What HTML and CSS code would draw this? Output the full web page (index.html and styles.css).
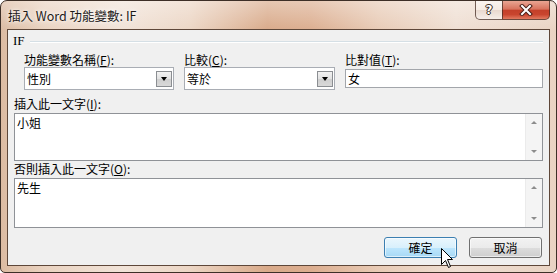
FILE: index.html
```html
<!DOCTYPE html>
<html lang="zh-Hant">
<head>
    <meta charset="UTF-8">
    <title>插入 Word 功能變數: IF</title>
    <link rel="stylesheet" href="styles.css">
</head>
<body>
    <div class="window">
        <div class="titlebar">
            <span class="title">插入 Word 功能變數: IF</span>
            <div class="caption-buttons">
                <div class="cap-btn help">?</div>
                <div class="cap-btn close">
                    <svg width="14" height="12" viewBox="0 0 14 12">
                        <path d="M3 2 L11 10 M11 2 L3 10" stroke="#4a2018" stroke-width="4" stroke-linecap="square"/>
                        <path d="M3 2 L11 10 M11 2 L3 10" stroke="#fff" stroke-width="2" stroke-linecap="square"/>
                    </svg>
                </div>
            </div>
        </div>

        <div class="client">
            <div class="group-title"><span>IF</span></div>

            <div class="fields">
                <div class="label">功能變數名稱(<u>F</u>):</div>
                <div class="label">比較(<u>C</u>):</div>
                <div class="label">比對值(<u>T</u>):</div>

                <div class="combo">
                    <span>性別</span>
                    <div class="drop-btn"></div>
                </div>
                <div class="combo">
                    <span>等於</span>
                    <div class="drop-btn"></div>
                </div>
                <div class="textfield">女</div>
            </div>

            <div class="label block">插入此一文字(<u>I</u>):</div>
            <div class="textbox first">
                <span class="text">小姐</span>
                <div class="scrollbar">
                    <div class="arrow up"></div>
                    <div class="arrow down"></div>
                </div>
            </div>

            <div class="label block second">否則插入此一文字(<u>O</u>):</div>
            <div class="textbox last">
                <span class="text">先生</span>
                <div class="scrollbar">
                    <div class="arrow up"></div>
                    <div class="arrow down"></div>
                </div>
            </div>

            <div class="buttons">
                <div class="btn default">確定</div>
                <div class="btn">取消</div>
            </div>
        </div>

        <svg class="cursor" width="13" height="21" viewBox="0 0 13 21">
            <path d="M0.5 0.5 L0.5 16.5 L4.5 12.5 L7.5 19.5 L9.5 18.5 L6.5 11.5 L11.5 11.5 Z" fill="#fff" stroke="#000" stroke-width="1"/>
        </svg>
    </div>
</body>
</html>
```

FILE: styles.css
```css
body {
    margin: 0;
    font-family: "Noto Sans CJK TC", "Noto Sans", sans-serif;
    font-size: 12px;
    color: #000;
    background: #fff;
}
.window {
    position: relative;
    width: 557px;
    height: 273px;
    box-sizing: border-box;
    border: 1px solid #3d2f27;
    border-radius: 7px 7px 5px 5px;
    padding: 0 6px 6px 6px;
    display: flex;
    flex-direction: column;
    background:
        linear-gradient(to bottom, rgba(255, 255, 255, 0.35), rgba(255, 255, 255, 0) 30px),
        linear-gradient(to right, #dcbba2 0%, #ead3c1 8%, #f1e3d8 22%, #ecd6c5 34%, #d9aa8a 48%, #dcae90 56%, #e8cbb6 68%, #efdfd3 82%, #e9d3c3 100%);
}
.titlebar {
    height: 28px;
    display: flex;
    align-items: flex-start;
}
.title {
    padding: 7px 0 0 1px;
    font-size: 12.5px;
    line-height: 16px;
    color: #1e1a18;
    text-shadow: 0 0 6px rgba(255, 255, 255, 0.95), 0 0 3px rgba(255, 255, 255, 0.9);
}
.caption-buttons {
    margin-left: auto;
    display: flex;
}
.cap-btn {
    height: 19px;
    box-sizing: border-box;
    border: 1px solid rgba(70, 45, 35, 0.75);
    border-top: none;
    display: flex;
    align-items: center;
    justify-content: center;
}
.help {
    width: 27px;
    border-right: none;
    border-radius: 0 0 0 5px;
    background: linear-gradient(to bottom, rgba(255, 255, 255, 0.55), rgba(255, 255, 255, 0.25) 50%, rgba(220, 200, 190, 0.4) 51%, rgba(255, 255, 255, 0.45));
    font-family: "DejaVu Sans", sans-serif;
    font-weight: bold;
    font-size: 12px;
    color: #fff;
    text-shadow: 0 0 1px #3a2a22, 1px 0 0 #3a2a22, -1px 0 0 #3a2a22, 0 1px 0 #3a2a22, 0 -1px 0 #3a2a22;
}
.close {
    width: 48px;
    border-radius: 0 0 5px 0;
    background: linear-gradient(to bottom, #e9a593 0%, #d8735e 45%, #c4402a 52%, #c9452e 75%, #e27a60 100%);
}
.client {
    flex: 1;
    border: 1px solid #5e4739;
    background: #f0f0f0;
    padding: 3px 6px 0 6px;
}
.group-title {
    display: flex;
    align-items: center;
    height: 15px;
    font-family: "Liberation Serif", serif;
    font-size: 13px;
}
.group-title span {
    margin-left: -1px;
    padding-right: 5px;
}
.group-title::after {
    content: "";
    flex: 1;
    border-top: 1px solid #d5dfe5;
    border-bottom: 1px solid #fff;
    margin-top: 3px;
}
.label {
    height: 14px;
    line-height: 14px;
    white-space: nowrap;
}
.fields {
    margin-top: 5px;
    padding-left: 10px;
    display: grid;
    grid-template-columns: 150px 151px 1fr;
    grid-template-rows: 14px 23px;
    column-gap: 10px;
}
.combo {
    box-sizing: border-box;
    height: 23px;
    border: 1px solid #a9adb4;
    background: #fff;
    display: flex;
    align-items: center;
    padding-left: 2px;
}
.drop-btn {
    margin-left: auto;
    margin-right: 1px;
    width: 16px;
    height: 16px;
    box-sizing: border-box;
    border: 1px solid #8b8e92;
    background: linear-gradient(to bottom, #f2f2f2, #e1e1e1 50%, #cfcfcf 51%, #d9d9d9);
    position: relative;
}
.drop-btn::after {
    content: "";
    position: absolute;
    left: 4px;
    top: 5px;
    border-left: 3.5px solid transparent;
    border-right: 3.5px solid transparent;
    border-top: 4px solid #000;
}
.textfield {
    box-sizing: border-box;
    height: 19px;
    margin-top: 2px;
    border: 1px solid #a3a6ab;
    background: #fff;
    padding-left: 2px;
    line-height: 17px;
}
.block {
    margin-top: 7px;
}
.block.second {
    margin-top: 1px;
}
.textbox {
    margin-top: 2px;
    box-sizing: border-box;
    border: 1px solid #8f9297;
    background: #fff;
    display: flex;
}
.textbox.first {
    height: 48px;
}
.textbox.last {
    height: 50px;
}
.textbox .text {
    flex: 1;
    padding: 2px 0 0 2px;
    line-height: 14px;
}
.scrollbar {
    width: 16px;
    background: #f4f4f4;
    border-left: 1px solid #ebebeb;
    display: flex;
    flex-direction: column;
    justify-content: space-between;
}
.arrow {
    height: 17px;
    display: flex;
    align-items: center;
    justify-content: center;
}
.arrow::after {
    content: "";
    border-left: 3px solid transparent;
    border-right: 3px solid transparent;
}
.arrow.up::after {
    border-bottom: 3px solid #8c8c8c;
}
.arrow.down::after {
    border-top: 3px solid #8c8c8c;
}
.buttons {
    margin-top: 9px;
    padding-right: 1px;
    display: flex;
    justify-content: flex-end;
    gap: 12px;
}
.btn {
    width: 73px;
    height: 21px;
    box-sizing: border-box;
    border: 1px solid #707070;
    border-radius: 3px;
    display: flex;
    align-items: center;
    justify-content: center;
    background: linear-gradient(to bottom, #f2f2f2 0%, #ebebeb 50%, #dddddd 51%, #cfcfcf 100%);
    box-shadow: inset 0 0 0 1px rgba(255, 255, 255, 0.6);
}
.btn.default {
    border-color: #3c7fb1;
    background: linear-gradient(to bottom, #eaf6fd 0%, #d9f0fc 50%, #bee6fd 51%, #a7d9f5 100%);
}
.cursor {
    position: absolute;
    left: 440px;
    top: 247px;
}
```
